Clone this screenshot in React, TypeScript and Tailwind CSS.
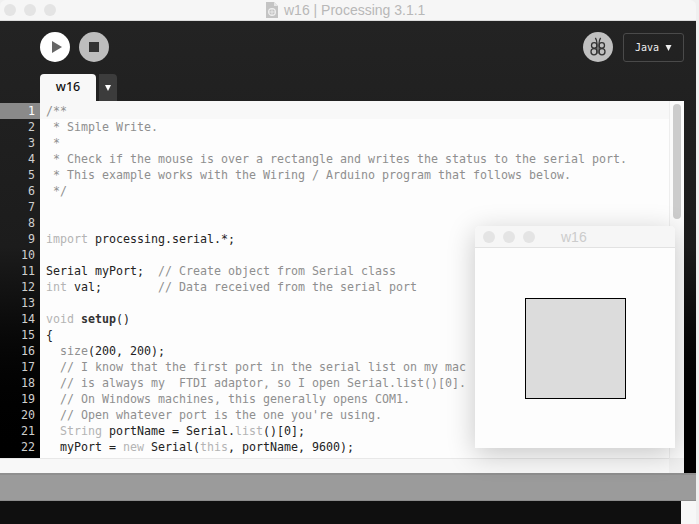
import React from 'react'

type Kind = 'c' | 'k' | 'n' | 'b'
type Segment = [string, Kind]

const kindClass: Record<Kind, string> = {
  c: 'text-[#8f8f8f]',
  k: 'text-[#b4b4b4]',
  n: 'text-[#222222]',
  b: 'text-[#333333] font-bold',
}

const lines: Segment[][] = [
  [['/**', 'c']],
  [[' * Simple Write.', 'c']],
  [[' *', 'c']],
  [[' * Check if the mouse is over a rectangle and writes the status to the serial port.', 'c']],
  [[' * This example works with the Wiring / Arduino program that follows below.', 'c']],
  [[' */', 'c']],
  [],
  [],
  [['import', 'k'], [' processing.serial.*;', 'n']],
  [],
  [['Serial myPort;', 'n'], ['  // Create object from Serial class', 'c']],
  [['int', 'k'], [' val;', 'n'], ['        // Data received from the serial port', 'c']],
  [],
  [['void', 'k'], [' ', 'n'], ['setup', 'b'], ['()', 'n']],
  [['{', 'n']],
  [['  ', 'n'], ['size', 'c'], ['(200, 200);', 'n']],
  [['  // I know that the first port in the serial list on my mac', 'c']],
  [['  // is always my  FTDI adaptor, so I open Serial.list()[0].', 'c']],
  [['  // On Windows machines, this generally opens COM1.', 'c']],
  [["  // Open whatever port is the one you're using.", 'c']],
  [['  ', 'n'], ['String', 'k'], [' portName = Serial.', 'n'], ['list', 'k'], ['()[0];', 'n']],
  [['  myPort = ', 'n'], ['new', 'k'], [' Serial(', 'n'], ['this', 'k'], [', portName, 9600);', 'n']],
]

const TrafficLights = () => (
  <div className="flex gap-2">
    <span className="h-3 w-3 rounded-full bg-[#e4e4e4]" />
    <span className="h-3 w-3 rounded-full bg-[#e4e4e4]" />
    <span className="h-3 w-3 rounded-full bg-[#e4e4e4]" />
  </div>
)

const Caret = ({ className }: { className: string }) => (
  <svg viewBox="0 0 6 6" className={className}>
    <polygon points="0,0 6,0 3,6" fill="currentColor" />
  </svg>
)

const App = () => {
  return (
    <div className="relative flex h-[524px] w-[699px] flex-col overflow-hidden bg-[#f0f0f0] font-['Liberation_Sans',sans-serif]">
      <div className="relative flex h-[21px] w-[696px] shrink-0 items-center rounded-t-md border-b border-[#dcdcdc] bg-[#f6f6f6] pl-1">
        <TrafficLights />
        <div className="absolute top-0 left-[266px] flex h-5 items-center gap-[6px]">
          <svg viewBox="0 0 12 16" className="h-4 w-3">
            <path d="M0 0H8L12 4V16H0Z" fill="#c4c4c4" />
            <path d="M8 0L12 4H8Z" fill="#e6e6e6" />
            <circle cx="6" cy="10" r="3.4" fill="none" stroke="#efefef" strokeWidth="1.2" />
            <path d="M3 10H9M6 7V13" stroke="#efefef" strokeWidth="0.8" />
          </svg>
          <span className="text-[14px] leading-none text-[#b8b8b8]">w16 | Processing 3.1.1</span>
        </div>
      </div>

      <div className="flex h-[452px] w-[696px] shrink-0 flex-col bg-linear-to-b from-[#232323] via-[#1c1c1c] to-black">
        <div className="flex h-[53px] shrink-0 items-start pt-[11px] pr-3 pl-10">
          <button className="flex h-[30px] w-[30px] items-center justify-center rounded-full bg-white">
            <svg viewBox="0 0 10 12" className="ml-[3px] h-3 w-[10px]">
              <polygon points="0,0 10,6 0,12" fill="#666666" />
            </svg>
          </button>
          <button className="ml-[9px] flex h-[30px] w-[30px] items-center justify-center rounded-full bg-[#bdbdbd]">
            <span className="h-[10px] w-[10px] bg-[#333333]" />
          </button>
          <button className="mr-[10px] ml-auto flex h-[30px] w-[30px] items-center justify-center rounded-full bg-[#c0c0c0]">
            <svg viewBox="0 0 30 30" className="h-[30px] w-[30px]" fill="none" stroke="#333333" strokeWidth="1.3">
              <path d="M12.4 5.8C13.4 7.5 13.9 9 13.9 11V21.5" />
              <path d="M17.6 5.8C16.6 7.5 16.1 9 16.1 11V21.5" />
              <ellipse cx="11.2" cy="13.4" rx="2.7" ry="2.8" />
              <ellipse cx="18.8" cy="13.4" rx="2.7" ry="2.8" />
              <ellipse cx="11" cy="19.7" rx="3" ry="3.1" />
              <ellipse cx="19" cy="19.7" rx="3" ry="3.1" />
            </svg>
          </button>
          <div className="mt-px flex h-[29px] w-[61px] items-center justify-center gap-[6px] rounded-[3px] border border-[#4a4a4a] font-['DejaVu_Sans_Mono',monospace] text-[10px] text-[#eeeeee]">
            <span>Java</span>
            <Caret className="h-[6px] w-[7px]" />
          </div>
        </div>

        <div className="flex h-[27px] shrink-0 pl-10">
          <div className="flex w-[56px] items-center justify-center rounded-t-[4px] bg-[#f8f8f8] pb-[1px] font-['Noto_Sans',sans-serif] text-[12.5px] font-medium text-[#111111]">
            w16
          </div>
          <div className="ml-[3px] flex w-[18px] items-center justify-center rounded-tr-[4px] bg-[#3c3c3c] text-white">
            <Caret className="h-[6px] w-[6px]" />
          </div>
        </div>

        <div className="mr-3 flex min-h-0 flex-1 flex-col">
          <div className="flex h-[357px] shrink-0 font-['DejaVu_Sans_Mono',monospace] text-[11.63px] leading-4">
            <div className="w-10 shrink-0 pt-[2px] text-right">
              {lines.map((_, i) => (
                <div key={i} className={i === 0 ? 'bg-[#8a8a8a] pr-[5px] text-white' : 'pr-[5px] text-[#cfcfcf]'}>
                  {i + 1}
                </div>
              ))}
            </div>
            <div className="flex-1 overflow-hidden bg-[#fdfdfd]">
              <div className="h-[2px] bg-[#f8f8f8]" />
              {lines.map((line, i) => (
                <div key={i} className={i === 0 ? 'h-4 bg-[#f8f8f8] pl-[6px] whitespace-pre' : 'h-4 pl-[6px] whitespace-pre'}>
                  {line.map(([text, kind], j) => (
                    <span key={j} className={kindClass[kind]}>
                      {text}
                    </span>
                  ))}
                </div>
              ))}
            </div>
            <div className="w-[15px] shrink-0 border-l border-[#eeeeee] bg-[#fbfbfb] pt-[3px] pl-[3px]">
              <div className="h-[115px] w-2 rounded-full bg-[#cccccc]" />
            </div>
          </div>
          <div className="flex h-[15px] shrink-0">
            <div className="flex-1 border-t border-[#e8e8e8] bg-[#f8f8f8]" />
            <div className="w-[15px] border-t border-[#efefef] bg-[#f1f1f1]" />
          </div>
        </div>
      </div>

      <div className="h-[28px] w-[696px] shrink-0 border-t-2 border-b border-t-[#8f8f8f] border-b-[#8c8c8c] bg-[#9b9b9b]" />

      <div className="flex h-[23px] w-[696px] shrink-0">
        <div className="w-[681px] bg-[#0f0f0f]" />
        <div className="flex-1 bg-[#f7f7f7]" />
      </div>

      <div className="absolute top-[226px] left-[475px] flex h-[222px] w-[200px] flex-col rounded-t-[5px] bg-[#fdfdfd] shadow-[0_6px_28px_rgba(0,0,0,0.22)]">
        <div className="relative flex h-[22px] shrink-0 items-center rounded-t-[5px] border-b border-[#e2e2e2] bg-[#f6f6f6] pl-2">
          <TrafficLights />
          <span className="absolute left-[86px] pt-px text-[14px] text-[#cccccc]">w16</span>
        </div>
        <div className="mt-[50px] ml-[50px] h-[101px] w-[101px] border border-black bg-[#dcdcdc]" />
      </div>
    </div>
  )
}

export default App
